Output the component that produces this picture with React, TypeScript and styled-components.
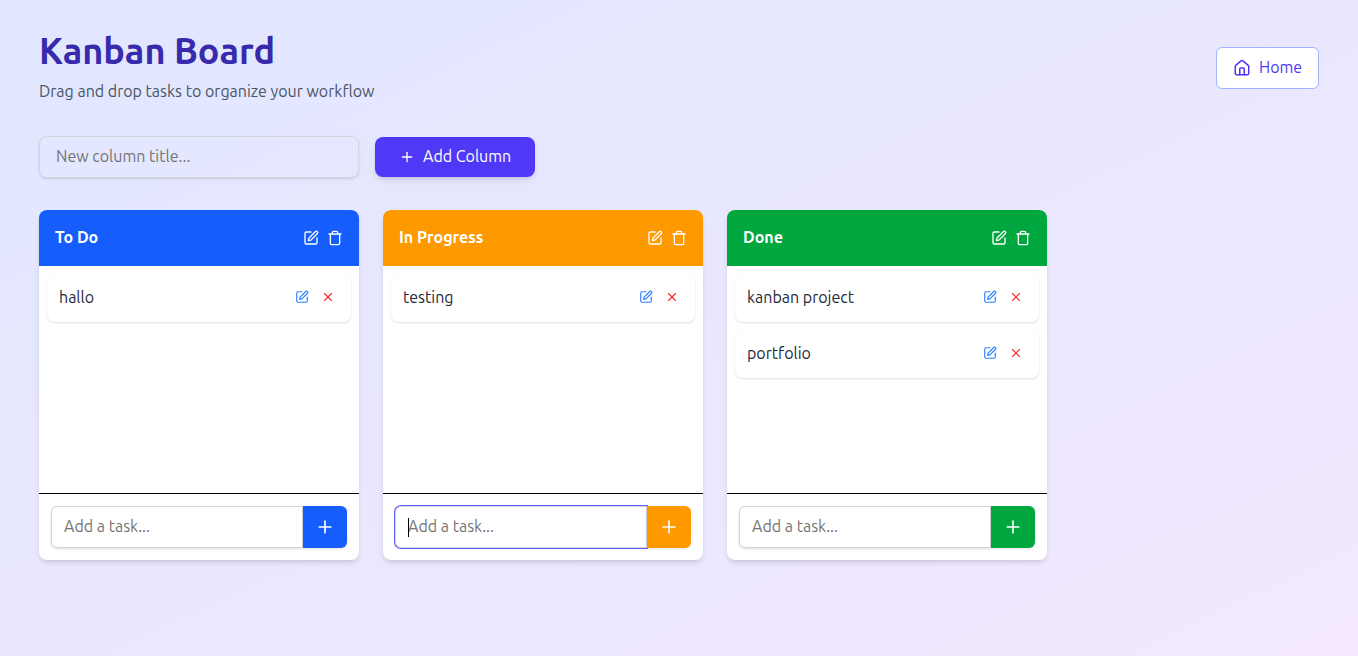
import React from "react";
import styled, { createGlobalStyle, css } from "styled-components";
import { House, Plus, SquarePen, Trash, X } from "lucide-react";

const GlobalStyle = createGlobalStyle`
  *, *::before, *::after { box-sizing: border-box; }
  body {
    margin: 0;
    font-family: Ubuntu, "Noto Sans", "Open Sans", sans-serif;
    font-size: 16px;
    line-height: 24px;
  }
  h1, h2, p { margin: 0; }
  button, input { font: inherit; }
  button { border: 0; padding: 0; background: none; cursor: pointer; }
  svg { display: block; flex: none; }
`;

const Page = styled.main`
  min-height: 100vh;
  padding: 28px 39px;
  background: linear-gradient(to bottom right in oklab, #e0e7ff, #f3e8ff);
`;

const Header = styled.header`
  display: flex;
  align-items: center;
  justify-content: space-between;
  height: 80px;
`;

const HeaderText = styled.div`
  height: 74px;
`;

const Title = styled.h1`
  font-size: 36px;
  line-height: 40px;
  font-weight: 700;
  color: #372aac;
`;

const Subtitle = styled.p`
  margin-top: 8px;
  color: #4a5565;
`;

const Label = styled.span`
  padding-bottom: 2px;
`;

const HomeLink = styled.button`
  display: flex;
  align-items: center;
  gap: 8px;
  width: 103px;
  height: 42px;
  padding: 0 16px;
  border: 1px solid #a3b3ff;
  border-radius: 6px;
  background: #fff;
  color: #4f39f6;
`;

const Toolbar = styled.div`
  display: flex;
  align-items: center;
  gap: 16px;
  margin: 28px 0 32px;
  height: 42px;
`;

const fieldBase = css`
  height: 42px;
  border: 1px solid #d1d5dc;
  outline: 0;
  color: #1e2939;
  &::placeholder { color: #757575; opacity: 1; }
`;

const ColumnField = styled.input`
  ${fieldBase}
  width: 320px;
  padding: 0 16px 2px;
  border-radius: 8px;
  background: transparent;
  box-shadow: 0 1px 3px rgba(0, 0, 0, 0.1), 0 1px 2px -1px rgba(0, 0, 0, 0.1);
`;

const AddColumn = styled.button`
  display: flex;
  align-items: center;
  gap: 8px;
  width: 160px;
  height: 40px;
  padding: 0 24px;
  border-radius: 8px;
  background: #4f39f6;
  color: #fff;
  white-space: nowrap;
  box-shadow: 0 4px 6px -1px rgba(0, 0, 0, 0.1), 0 2px 4px -2px rgba(0, 0, 0, 0.1);
`;

const Board = styled.div`
  display: flex;
  gap: 24px;
`;

const ColumnCard = styled.section`
  display: flex;
  flex-direction: column;
  width: 320px;
  height: 350px;
  border-radius: 8px;
  overflow: hidden;
  background: #fff;
  box-shadow: 0 4px 6px -1px rgba(0, 0, 0, 0.1), 0 2px 4px -2px rgba(0, 0, 0, 0.1);
`;

const ColumnHeader = styled.div<{ $color: string }>`
  display: flex;
  align-items: center;
  justify-content: space-between;
  height: 56px;
  padding: 0 16px;
  background: ${(p) => p.$color};
  color: #fff;
`;

const ColumnTitle = styled.h2`
  padding-bottom: 2px;
  font-size: 16px;
  font-weight: 600;
`;

const HeaderActions = styled.div`
  display: flex;
  gap: 8px;
  button { color: #fff; }
`;

const TaskList = styled.div`
  flex: 1;
  display: flex;
  flex-direction: column;
  gap: 8px;
  padding: 8px;
`;

const TaskCard = styled.div`
  display: flex;
  align-items: center;
  justify-content: space-between;
  height: 48px;
  padding: 0 12px 2px;
  border-radius: 8px;
  background: #fff;
  color: #1e2939;
  box-shadow: 0 1px 3px rgba(0, 0, 0, 0.1), 0 1px 2px -1px rgba(0, 0, 0, 0.1);
`;

const TaskActions = styled.div`
  display: flex;
  gap: 4px;
`;

const TaskButton = styled.button<{ $color: string }>`
  padding: 4px;
  color: ${(p) => p.$color};
`;

const Footer = styled.div`
  display: flex;
  padding: 12px;
  border-top: 1px solid #000;
`;

const FieldWrap = styled.div`
  position: relative;
  flex: 1;
  display: flex;
`;

const TaskField = styled.input<{ $active?: boolean }>`
  ${fieldBase}
  width: 100%;
  min-width: 0;
  padding: 0 12px 2px;
  border-radius: 6px 0 0 6px;
  background: #fff;
  box-shadow: ${(p) => (p.$active ? "0 0 0 1px #615fff, " : "")}
    0 1px 3px rgba(0, 0, 0, 0.1), 0 1px 2px -1px rgba(0, 0, 0, 0.1);
`;

const Caret = styled.span`
  position: absolute;
  left: 13px;
  top: 12px;
  width: 1px;
  height: 19px;
  background: #000;
`;

const AddTask = styled.button<{ $color: string }>`
  position: relative;
  display: flex;
  align-items: center;
  justify-content: center;
  width: 44px;
  height: 42px;
  border-radius: 0 6px 6px 0;
  background: ${(p) => p.$color};
  color: #fff;
  box-shadow: 0 1px 3px rgba(0, 0, 0, 0.1);
`;

const columns = [
  { title: "To Do", color: "#155dfc", tasks: ["hallo"] },
  { title: "In Progress", color: "#fe9a00", tasks: ["testing"], active: true },
  { title: "Done", color: "#00a63e", tasks: ["kanban project", "portfolio"] },
];

export default function App() {
  return (
    <>
      <GlobalStyle />
      <Page>
        <Header>
          <HeaderText>
            <Title>Kanban Board</Title>
            <Subtitle>Drag and drop tasks to organize your workflow</Subtitle>
          </HeaderText>
          <HomeLink>
            <House size={18} />
            <Label>Home</Label>
          </HomeLink>
        </Header>
        <Toolbar>
          <ColumnField placeholder="New column title..." />
          <AddColumn>
            <Plus size={16} />
            <Label>Add Column</Label>
          </AddColumn>
        </Toolbar>
        <Board>
          {columns.map((col) => (
            <ColumnCard key={col.title}>
              <ColumnHeader $color={col.color}>
                <ColumnTitle>{col.title}</ColumnTitle>
                <HeaderActions>
                  <button aria-label="Edit column"><SquarePen size={16} /></button>
                  <button aria-label="Delete column"><Trash size={16} /></button>
                </HeaderActions>
              </ColumnHeader>
              <TaskList>
                {col.tasks.map((task) => (
                  <TaskCard key={task}>
                    <span>{task}</span>
                    <TaskActions>
                      <TaskButton $color="#2b7fff" aria-label="Edit task"><SquarePen size={14} /></TaskButton>
                      <TaskButton $color="#fb2c36" aria-label="Delete task"><X size={14} /></TaskButton>
                    </TaskActions>
                  </TaskCard>
                ))}
              </TaskList>
              <Footer>
                <FieldWrap>
                  <TaskField placeholder="Add a task..." $active={col.active} />
                  {col.active && <Caret />}
                </FieldWrap>
                <AddTask $color={col.color} aria-label="Add task"><Plus size={20} /></AddTask>
              </Footer>
            </ColumnCard>
          ))}
        </Board>
      </Page>
    </>
  );
}
